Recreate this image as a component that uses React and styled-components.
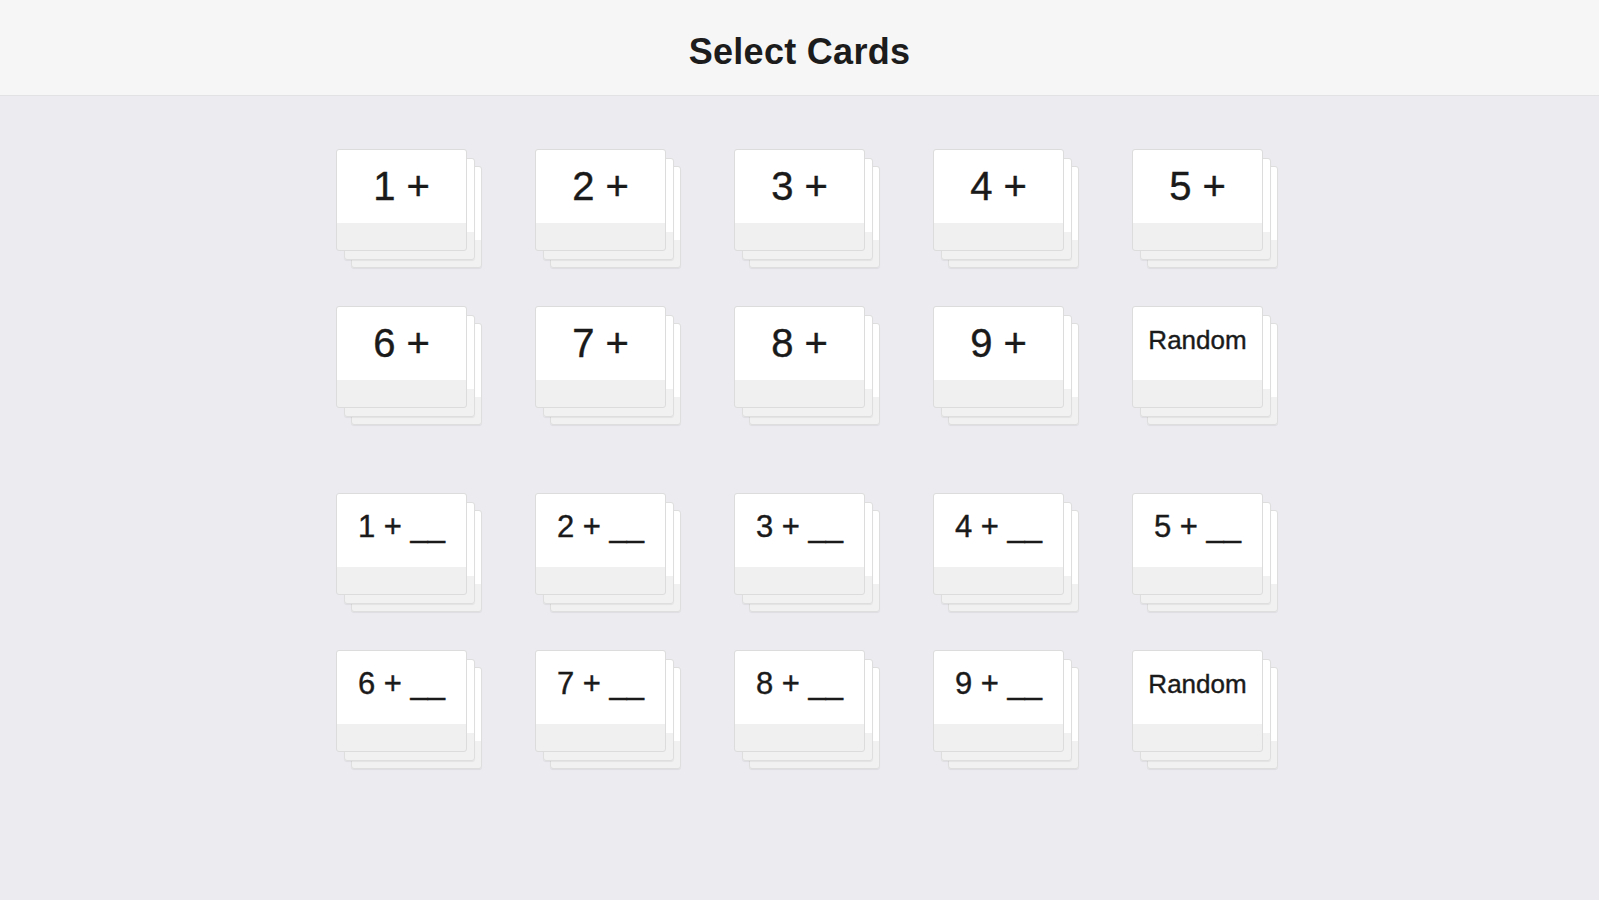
import React from 'react';
import styled, { createGlobalStyle } from 'styled-components';

const GlobalStyle = createGlobalStyle`
    html, body {
        margin: 0;
        padding: 0;
        background: #ebebf0;
        font-family: 'Liberation Sans', Arial, sans-serif;
    }
`;

const Page = styled.div`
    min-height: 900px;
    background: #ebebf0;
`;

const Header = styled.div`
    height: 96px;
    box-sizing: border-box;
    padding-top: 8px;
    display: flex;
    align-items: center;
    justify-content: center;
    background: #f6f6f6;
    border-bottom: 1px solid #e2e2e4;
`;

const Title = styled.h1`
    margin: 0;
    font-size: 36px;
    font-weight: 700;
    color: #1c1c1c;
    letter-spacing: 0.3px;
`;

const Content = styled.div`
    display: flex;
    flex-direction: column;
    align-items: center;
    padding-top: 53px;
    gap: 85px;
`;

const Grid = styled.div`
    display: grid;
    grid-template-columns: repeat(5, 131px);
    column-gap: 68px;
    row-gap: 55px;
`;

const Stack = styled.div`
    position: relative;
    width: 131px;
    height: 102px;
`;

const Layer = styled.div`
    position: absolute;
    left: ${p => p.$dx}px;
    top: ${p => p.$dy}px;
    width: 131px;
    height: 102px;
    box-sizing: border-box;
    background: linear-gradient(#ffffff 73%, #f1f1f1 73%);
    border: 1px solid #dedede;
    border-radius: 3px;
    box-shadow: 0 1px 1px rgba(0, 0, 0, 0.06);
`;

const Front = styled.div`
    position: relative;
    width: 131px;
    height: 102px;
    box-sizing: border-box;
    background: linear-gradient(#ffffff 73%, #f0f0f0 73%);
    border: 1px solid #dcdcdc;
    border-radius: 3px;
    text-align: center;
    color: #1a1a1a;
    font-size: ${p => p.$size}px;
    padding-top: ${p => p.$pad}px;
    line-height: 1;
    white-space: pre;
    -webkit-text-stroke: 0.4px #1a1a1a;
`;

const variants = {
    big: { size: 40, pad: 16 },
    blank: { size: 31, pad: 17 },
    random: { size: 26, pad: 20 },
};

function Card({ label, kind }) {
    const v = variants[kind];
    return (
        <Stack>
            <Layer $dx={15} $dy={17} />
            <Layer $dx={8} $dy={9} />
            <Front $size={v.size} $pad={v.pad}>{label}</Front>
        </Stack>
    );
}

const nums = [1, 2, 3, 4, 5, 6, 7, 8, 9];

export default function App() {
    return (
        <Page>
            <GlobalStyle />
            <Header>
                <Title>Select Cards</Title>
            </Header>
            <Content>
                <Grid>
                    {nums.map(n => <Card key={n} label={`${n} +`} kind="big" />)}
                    <Card label="Random" kind="random" />
                </Grid>
                <Grid>
                    {nums.map(n => <Card key={n} label={`${n} + __`} kind="blank" />)}
                    <Card label="Random" kind="random" />
                </Grid>
            </Content>
        </Page>
    );
}
